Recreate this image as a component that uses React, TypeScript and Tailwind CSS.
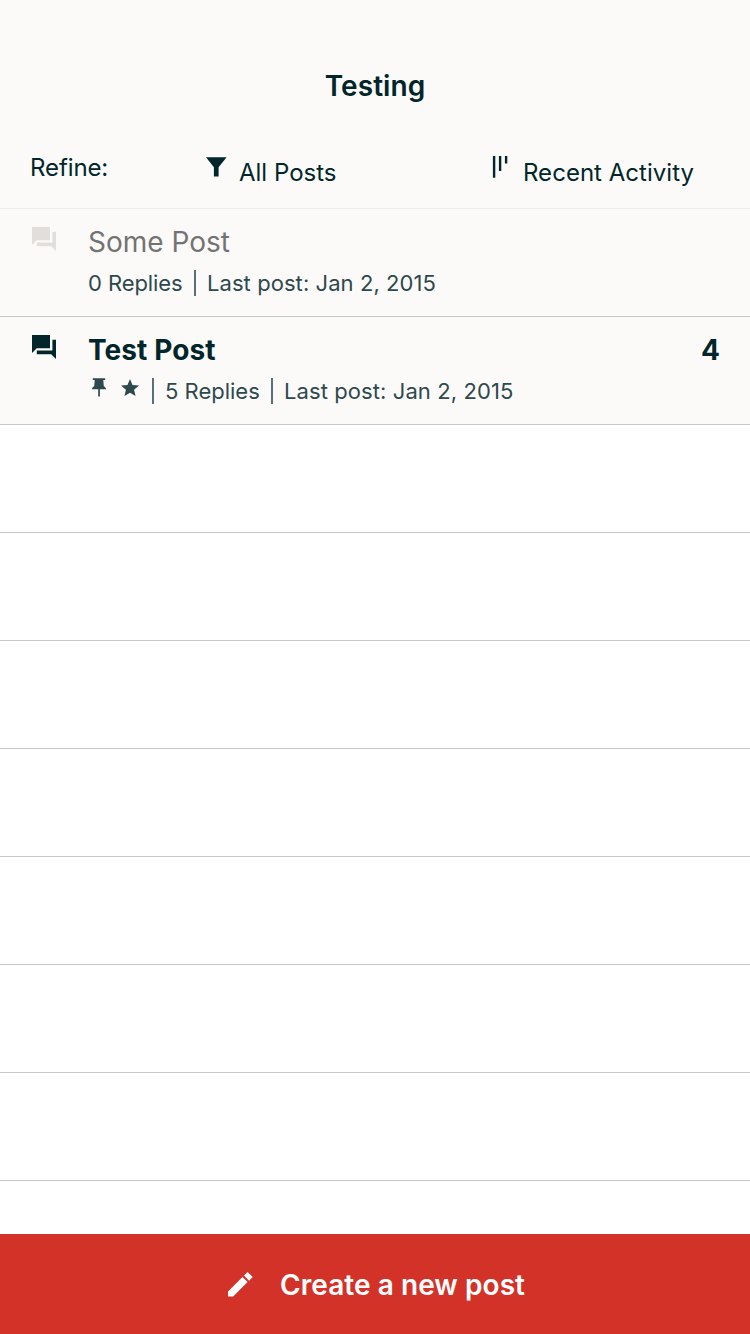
import type { ReactNode } from "react";

function ForumIcon({ className }: { className: string }) {
  return (
    <svg viewBox="2 2 20 20" className={className} fill="currentColor">
      <path d="M22 6h-3v9H6v3h12l4 4V6zm-5 7V2H2v15l4-4h11z" />
    </svg>
  );
}

function FunnelIcon() {
  return (
    <svg viewBox="0 0 21 20" className="mt-1 ml-[0.5px] h-5 w-[21px]" fill="currentColor">
      <path d="M0 .3h20.6l-8 10v9.2H7.9v-9.2z" />
    </svg>
  );
}

function SortIcon() {
  return (
    <svg viewBox="0 0 16 22" className="mt-[3px] h-[22px] w-4" fill="currentColor">
      <path d="M.9 0h2.4v21.7H.9zM6.9 0h2.4v15H6.9zM12.9 0h2.4v7.5h-2.4z" />
    </svg>
  );
}

function PinIcon() {
  return (
    <svg viewBox="0 0 14 19" className="h-[19px] w-[14px]" fill="currentColor">
      <path d="M.8 .3h12.4v1.8h-1.9l.5 6.2c1.4.6 2.2 1.5 2.2 3H7.9v7.2H6.2v-7.2H0c0-1.5.8-2.4 2.2-3l.5-6.2H.8z" />
    </svg>
  );
}

function StarIcon() {
  return (
    <svg viewBox="2 2 20 19" className="mt-[1px] h-[17px] w-[18px]" fill="currentColor">
      <path d="M12 17.27 18.18 21l-1.64-7.03L22 9.24l-7.19-.61L12 2 9.19 8.63 2 9.24l5.46 4.73L5.82 21z" />
    </svg>
  );
}

function PencilIcon() {
  return (
    <svg viewBox="0 0 25 25" className="mt-[1px] h-[25px] w-[25px]" fill="currentColor">
      <path d="M0 24.6v-5.1L14.5 5l5.1 5.1L5.1 24.6zM19.6 0l5.1 5.1-3.6 3.6L16 3.6z" />
    </svg>
  );
}

function Divider() {
  return <span className="h-[26px] w-[2px] bg-[#57707a]" />;
}

function Row({ children }: { children?: ReactNode }) {
  return <li className="flex h-[108px] shrink-0 border-b border-[#c8c7cc]">{children}</li>;
}

export default function App() {
  return (
    <div className="flex h-[1334px] w-[750px] flex-col overflow-hidden bg-white font-['Inter',sans-serif] text-[#00262b]">
      <header className="flex h-[209px] shrink-0 flex-col border-b border-[#eeeceb] bg-[#fcfaf8]">
        <h1 className="mt-[69px] text-center text-[28px] leading-[34px] font-semibold tracking-[0.06px]">Testing</h1>
        <div className="mt-[50px] flex items-start text-2xl leading-[30px]">
          <span className="w-[205px] pl-[30px] tracking-[-0.1px]">Refine:</span>
          <button className="flex w-[287px] items-start text-left">
            <FunnelIcon />
            <span className="mt-[5px] ml-[12.5px]">All Posts</span>
          </button>
          <button className="flex items-start">
            <SortIcon />
            <span className="mt-[5px] ml-[15px] tracking-[0.03px]">Recent Activity</span>
          </button>
        </div>
      </header>

      <ul className="flex min-h-0 flex-1 flex-col overflow-hidden">
        <div className="shrink-0 bg-[#fcfaf8]">
          <Row>
            <ForumIcon className="mt-[18px] ml-8 h-6 w-6 text-[#e2dedc]" />
            <div className="ml-8 pt-4">
              <h2 className="text-[28px] leading-[34px] text-[#737373]">Some Post</h2>
              <div className="mt-[11px] flex text-[22px] leading-[26px] text-[#2d494e]">
                <span className="w-[106px] tracking-[-0.08px]">0 Replies</span>
                <Divider />
                <span className="ml-[11px] tracking-[0.07px]">Last post: Jan 2, 2015</span>
              </div>
            </div>
          </Row>
          <Row>
            <ForumIcon className="mt-[18px] ml-8 h-6 w-6" />
            <div className="ml-8 flex-1 pt-4">
              <h2 className="text-[28px] leading-[34px] font-bold tracking-[0.08px]">Test Post</h2>
              <div className="mt-[11px] flex text-[22px] leading-[26px] text-[#2d494e]">
                <span className="flex w-[64px] gap-[15px] pl-1"><PinIcon /><StarIcon /></span>
                <Divider />
                <span className="ml-[11px] w-[106px]">5 Replies</span>
                <Divider />
                <span className="ml-[11px] tracking-[0.09px]">Last post: Jan 2, 2015</span>
              </div>
            </div>
            <span className="pt-4 pr-[30px] text-[28px] leading-[34px] font-bold">4</span>
          </Row>
        </div>
        {Array.from({ length: 8 }, (_, i) => (
          <Row key={i} />
        ))}
      </ul>

      <button className="flex h-[100px] shrink-0 items-center bg-[#d33229] pl-[228px] text-[28px] leading-[34px] font-semibold text-white">
        <PencilIcon />
        <span className="mt-[2px] ml-[27px] tracking-[0.06px]">Create a new post</span>
      </button>
    </div>
  );
}
